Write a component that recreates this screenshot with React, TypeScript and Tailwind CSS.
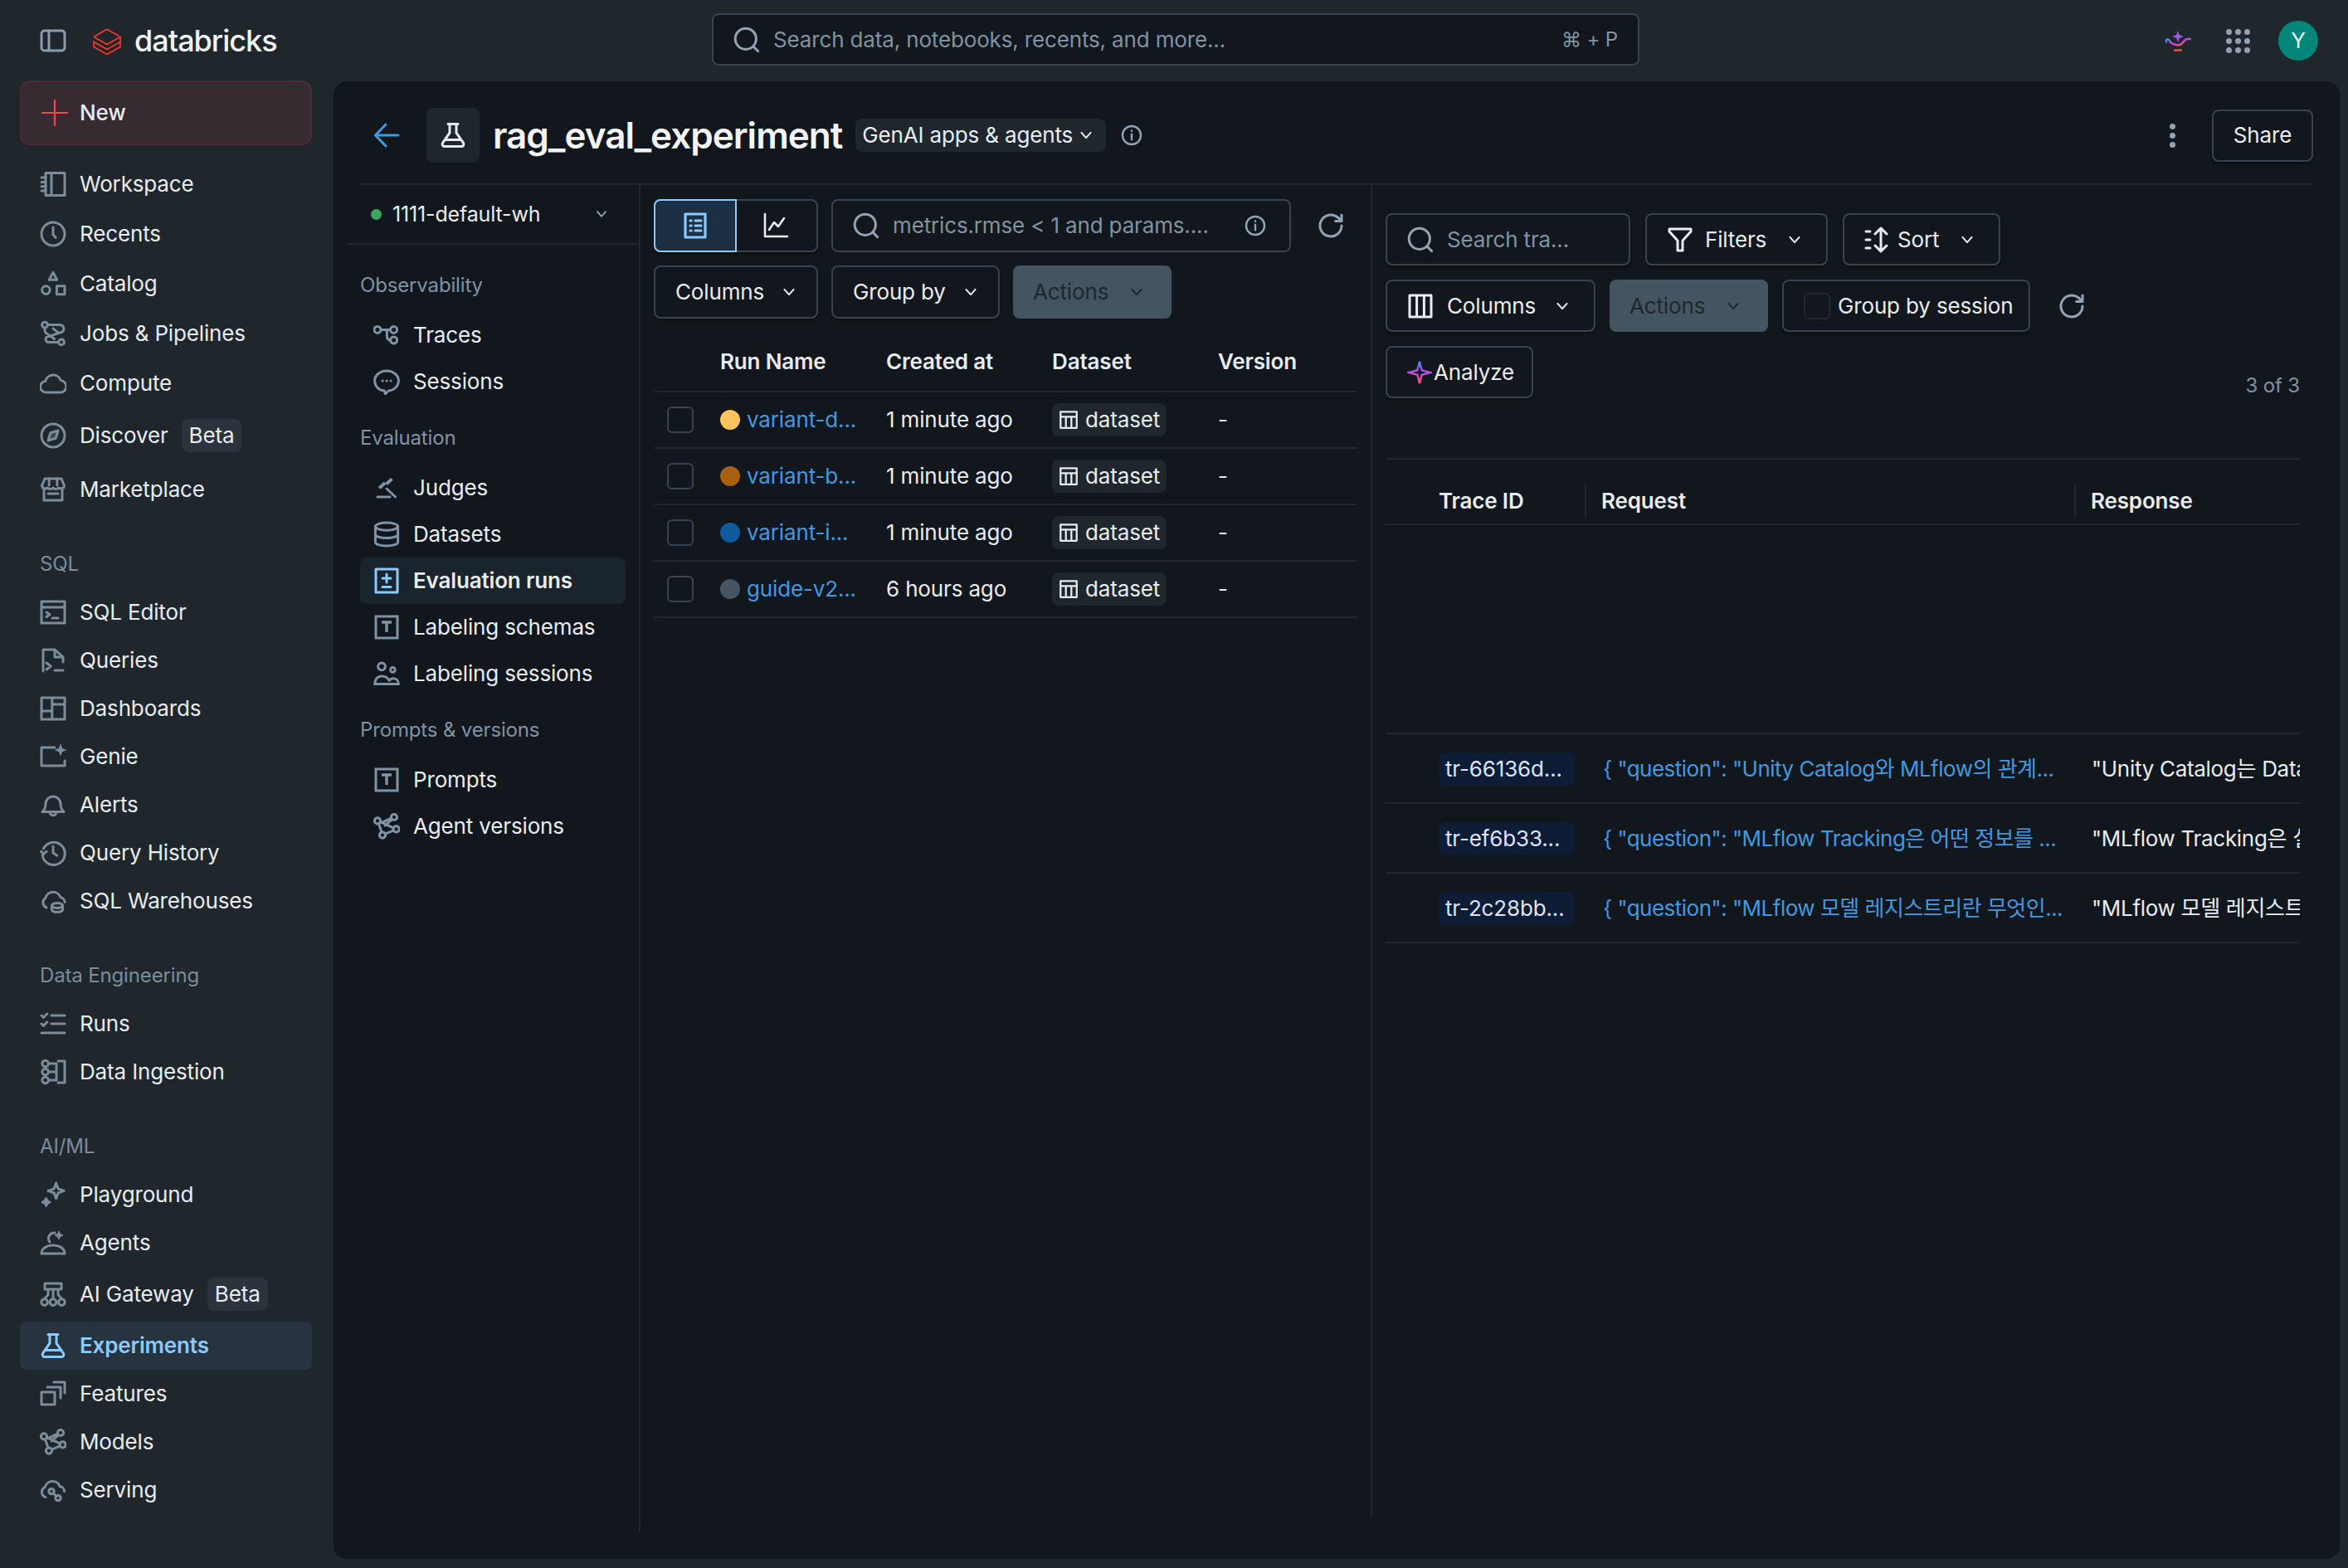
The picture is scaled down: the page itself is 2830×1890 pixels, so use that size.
import type { ReactNode } from 'react'

const stroke = { fill: 'none', stroke: 'currentColor', strokeLinecap: 'round', strokeLinejoin: 'round' } as const

const paths: Record<string, ReactNode> = {
  panel: <><rect x="1" y="2" width="14" height="12" rx="1.800" /><path d="M5.500 2v12" /></>,
  workspace: <><path d="M3.500 1.200H15v13.600H3.500z" /><path d="M7 1.200v13.600M1 4h2.500M1 6.700h2.500M1 9.400h2.500M1 12h2.500" /></>,
  recents: <><circle cx="8" cy="8" r="7" /><path d="M8 4v4.400l1.600 1.800" /></>,
  catalog: <><path d="M8 1.200l2.400 4.400H5.600z" /><circle cx="3.700" cy="11.800" r="2.400" /><path d="M10.200 9.400H15v5h-4.800z" /></>,
  jobs: <><circle cx="3" cy="2.800" r="1.700" /><circle cx="13" cy="13.200" r="1.700" /><path d="M5 2.800h7.200a2.400 2.400 0 0 1 1.400 4.200L4 10.200a2 2 0 0 0 .6 3h6.400M3 5v1.400a2 2 0 0 0 .8 1.400l5 3.400M8 5l3 2.400" /></>,
  compute: <path d="M4 13.500a3.400 3.400 0 0 1-.6-6.800 4.800 4.800 0 0 1 9.200-.4 3.600 3.600 0 0 1-.6 7.200z" />,
  discover: <><circle cx="8" cy="8" r="7" /><path d="M11 5L9.600 9.600 5 11l1.400-4.600z" fill="currentColor" fillOpacity=".3" /></>,
  market: <><path d="M2.500 8v6.500h11V8M1.200 5.800L3 1.500h10l1.800 4.300a2.100 2.100 0 0 1-3.400 1.200 2.400 2.400 0 0 1-3.400 0 2.400 2.400 0 0 1-3.400 0 2.100 2.100 0 0 1-3.400-1.200z" /><path d="M5.600 1.500v4M10.400 1.500v4M5 10.500h6" /></>,
  sqlEditor: <><path d="M1 1.500h14v13H1zM1 5h14" /><path d="M4 8l2 1.400L4 10.800M7.500 11.500H11" /></>,
  queries: <><path d="M2 14.500V1.500h7l5 4.500v3M9 1.500V6h5" /><path d="M4 9.500l2.600 2L4 13.500M9 14h5" /></>,
  dash: <path d="M1 1.500h14v13H1zM7.400 1.500v13M7.400 9.500H1M7.400 5.500H15" />,
  genie: <><path d="M9 2.500H1v11h14v-3" /><path d="M12.500 .8l.9 2.300 2.300.9-2.300.9-.9 2.300-.9-2.300-2.300-.9 2.300-.9z" fill="currentColor" strokeWidth=".5" /></>,
  bell: <><path d="M1.500 12.200c1.200-1 2-2 2-4.700a4.500 4.500 0 0 1 9 0c0 2.700.8 3.700 2 4.700z" /><path d="M6 12.400a2 2 0 0 0 4 0" /></>,
  history: <><path d="M2.200 5.500a6.800 6.800 0 1 1-.6 4" /><path d="M.8 7.200l1.500 1.600L4 7.200" /><path d="M8 4v4l2.400 1.600" /></>,
  warehouse: <><path d="M4 12a3.300 3.300 0 0 1-.6-5.800 4.700 4.700 0 0 1 9-.4 3 3 0 0 1 2.600 3" /><ellipse cx="10.500" cy="10.800" rx="3.300" ry="1.500" /><path d="M7.200 10.800v2.500c0 .8 1.500 1.500 3.300 1.500s3.300-.7 3.300-1.500v-2.500" /></>,
  runs: <path d="M1 3l1.200 1.200L4.400 2M1 8l1.200 1.200L4.400 7M7 3h8M7 8h8M1 13.500h14" />,
  ingest: <><circle cx="3.300" cy="3" r="1.900" /><circle cx="3.300" cy="8" r="1.900" /><circle cx="3.300" cy="13" r="1.900" /><path d="M5.500 3H10v10H5.500M10 8H5.500M11 1.500h4v13h-4" /></>,
  play: <><path d="M9.800 1l1.200 3.400 3.600 1.300-3.600 1.300-1.200 3.400L8.600 7 5 5.700l3.600-1.300z" /><path d="M3.800 10.300l.7 1.500 1.500.7-1.500.7-.7 1.500-.7-1.500-1.500-.7 1.500-.7z" fill="currentColor" /></>,
  agents: <><path d="M1 14.500c0-3 3-5 7-5s7 2 7 5z" /><path d="M9 2a3.400 3.400 0 0 0-3 5.500" /><path d="M11.500 1l.8 1.700 1.700.8-1.700.8-.8 1.700-.8-1.700-1.700-.8 1.700-.8z" fill="currentColor" strokeWidth=".5" /></>,
  gateway: <><path d="M3 1.500h10v3.500H3zM8 5v5.500M5 5v3.200L3 10.500M11 5v3.200l2 2.300" /><circle cx="2.800" cy="12.800" r="1.900" /><circle cx="8" cy="12.800" r="1.900" /><circle cx="13.200" cy="12.800" r="1.900" /></>,
  beaker: <><path d="M5 1.200h6M6 1.200v5.400L1.800 12.600a1.300 1.300 0 0 0 1.100 2.100h10.200a1.300 1.300 0 0 0 1.100-2.100L10 6.600V1.200" /><path d="M3.400 10.800h9.200" /></>,
  features: <path d="M1 7h8v7.500H1zM4.500 4h8v6.500M8.500 1H15v6.500" />,
  models: <><circle cx="2.500" cy="4.700" r="1.800" /><circle cx="12.500" cy="2.500" r="1.800" /><circle cx="13.800" cy="9.700" r="1.800" /><circle cx="5.500" cy="13.300" r="1.800" /><path d="M4.200 5.300l7.900 3.600M10.800 3.100L5 5.800M11.300 3.800L7 7.500M3.200 6.400l1.800 5.100M7.200 12.600l5-2.200" /></>,
  serving: <><path d="M3.500 12.300a3.200 3.200 0 0 1-.4-6 4.700 4.700 0 0 1 9-.4 3 3 0 0 1 2.700 3" /><circle cx="7" cy="8.800" r="1.600" /><circle cx="11" cy="12.800" r="1.600" /><path d="M8.200 10l1.600 1.600" /></>,
  traces: <><circle cx="2.500" cy="4.700" r="2" /><circle cx="12.300" cy="4.700" r="2" /><circle cx="12.300" cy="11" r="2" /><path d="M4.500 4.700h5.800M6.800 4.700c.9 0 1.400.5 1.400 1.500v2.600c0 1.500.7 2.200 2.100 2.200" /></>,
  sessions: <><path d="M8 1.500c-4 0-7.200 2.700-7.200 6s2.600 5.700 5.800 6l.6 1.800 2-1.800c3.200-.3 6-2.700 6-6 0-3.300-3.200-6-7.200-6z" /><path d="M5.500 7.500h.1M8 7.500h.1M10.500 7.500h.1" /></>,
  judges: <><path d="M7.800 5.800L11.200 2.600M3.600 8.200L7 5" strokeWidth="2" strokeLinecap="butt" /><path d="M8 8.500l5.300 5M2.500 13.500h7.500" /></>,
  datasets: <><ellipse cx="8" cy="3.300" rx="6.800" ry="2.300" /><path d="M1.200 3.300v9.400c0 1.300 3 2.300 6.800 2.300s6.800-1 6.800-2.300V3.300M1.200 8c0 1.300 3 2.300 6.800 2.300s6.800-1 6.800-2.300" /></>,
  evalRuns: <><path d="M1.500 1h13v14h-13z" /><path d="M8 4v5M5.500 6.500h5M5.500 11.800h5" /></>,
  schema: <><path d="M1.500 1.500h13v13h-13z" strokeLinejoin="miter" /><path d="M5 5h6M8 5v6" strokeLinecap="butt" strokeWidth="1.700" /></>,
  people: <><circle cx="5" cy="3.700" r="2.200" /><circle cx="11.700" cy="5.700" r="1.400" /><path d="M.8 14.200c0-2.800 1.900-4.700 4.200-4.700 2.100 0 3.700 1 4.500 2.600.7-.8 1.500-1.200 2.400-1.200 1.800 0 3.300 1.300 3.300 3.300z" /></>,
  back: <path d="M15 8H1.500M7.500 1.500L1.200 8l6.300 6.500" />,
  info: <><circle cx="8" cy="8" r="6.800" /><path d="M8 7.200v4M8 4.600v.2" /></>,
  search: <><circle cx="7.400" cy="7.400" r="6.300" /><path d="M12 12l2.800 2.800" /></>,
  refresh: <path d="M14.500 8A6.500 6.500 0 1 1 12.300 3.100L14.500 5.200M14.500 1.500v3.700h-3.700" />,
  list: <><path d="M2 1h12v14H2z" /><path d="M5 5h.6M5 8h.6M5 11h.6M8 5h3.500M8 8h3.500M8 11h3.500" /></>,
  chart: <path d="M1.500 1v13.500H15M4 10.500l3-4.500 2.500 2.500L13 3.500" />,
  filter: <path d="M1.500 1.500h13v1.500L9.500 8.500v6h-3v-6L1.500 3z" />,
  sort: <path d="M1 3h2.500M1 8h2.500M1 13h2.500M10 15V1M6.500 4.500L10 1l3.500 3.500M6.500 11.500L10 15l3.500-3.500" />,
  columns: <path d="M1.500 1.500h13v13h-13zM5.800 1.500v13M10.200 1.500v13" />,
  table: <path d="M1.500 1.500h13v13h-13zM1.500 5.500h13M5.800 5.500v9M10.200 5.500v9" />,
  chevron: <path d="M3.500 5.500L8 10.500l4.500-5" />,
  plus: <path d="M8 .5v15M.5 8h15" />,
}

function Icon({ name, size = 32, className = '', width = 1.5 }: { name: string; size?: number; className?: string; width?: number }) {
  return (
    <svg viewBox="0 0 16 16" width={size} height={size} className={`shrink-0 ${className}`} {...stroke} strokeWidth={width}>
      {paths[name]}
    </svg>
  )
}

function Beta() {
  return <span className="ml-4 h-[40px] px-[9px] flex items-center rounded-[8px] bg-[#2b343c]">Beta</span>
}

function SideItem({ icon, label, beta, active, h = 'h-[58px]' }: { icon: string; label: string; beta?: boolean; active?: boolean; h?: string }) {
  return (
    <div className={`${h} flex items-center px-6 rounded-[8px] ${active ? 'bg-[#27343f] text-[#8acaff] font-semibold' : 'text-[#e8ecf0]'}`}>
      <Icon name={icon} className={`mr-4 ${active ? 'text-[#8acaff]' : 'text-[#7b8c9a]'}`} />
      <span>{label}</span>
      {beta && <Beta />}
    </div>
  )
}

function SideLabel({ children, className = '' }: { children: ReactNode; className?: string }) {
  return <div className={`h-[30px] pl-[24px] flex items-center text-[24px] text-[#7b8c9a] ${className}`}>{children}</div>
}

function Sidebar() {
  return (
    <aside className="w-[402px] shrink-0 pl-6 pr-[26px] -mt-px">
      <div className="h-[78px] flex items-center px-6 rounded-[12px] bg-[#352b30] border-2 border-[#4a2c31] font-medium text-[#e8ecf0]">
        <Icon name="plus" className="mr-[14px] text-[#f0484f]" width={1.1} />
        New
      </div>
      <div className="mt-[17px]">
        <SideItem h="h-[60px]" icon="workspace" label="Workspace" />
        <SideItem h="h-[60px]" icon="recents" label="Recents" />
        <SideItem h="h-[60px]" icon="catalog" label="Catalog" />
        <SideItem h="h-[60px]" icon="jobs" label="Jobs & Pipelines" />
        <SideItem h="h-[60px]" icon="compute" label="Compute" />
        <SideItem h="h-[66px]" icon="discover" label="Discover" beta />
        <SideItem h="h-[64px]" icon="market" label="Marketplace" />
      </div>
      <SideLabel className="mt-[43px] mb-[14px]">SQL</SideLabel>
      <SideItem icon="sqlEditor" label="SQL Editor" />
      <SideItem icon="queries" label="Queries" />
      <SideItem icon="dash" label="Dashboards" />
      <SideItem icon="genie" label="Genie" />
      <SideItem icon="bell" label="Alerts" />
      <SideItem icon="history" label="Query History" />
      <SideItem icon="warehouse" label="SQL Warehouses" />
      <SideLabel className="mt-[46px] mb-[14px]">Data Engineering</SideLabel>
      <SideItem icon="runs" label="Runs" />
      <SideItem icon="ingest" label="Data Ingestion" />
      <SideLabel className="mt-[46px] mb-[14px]">AI/ML</SideLabel>
      <SideItem icon="play" label="Playground" />
      <SideItem icon="agents" label="Agents" />
      <SideItem h="h-[66px]" icon="gateway" label="AI Gateway" beta />
      <SideItem icon="beaker" label="Experiments" active />
      <SideItem icon="features" label="Features" />
      <SideItem icon="models" label="Models" />
      <SideItem icon="serving" label="Serving" />
    </aside>
  )
}

function Topbar() {
  return (
    <header className="h-[98px] shrink-0 flex items-center">
      <div className="w-[858px] shrink-0 flex items-center pl-12">
        <Icon name="panel" className="text-[#8b9dad]" />
        <svg viewBox="0 0 34 35" width="34" height="35" className="ml-8" fill="none" stroke="#ff3621" strokeWidth="1.700">
          <path d="M1 12.500L17 3.300 31.500 11.500M1 12.500L17 21.500 33 12.500V18.500L17 27.500 1 18.500V24.500L17 33.500 33 24.500V19" />
        </svg>
        <span className="ml-4 text-[36px] font-medium tracking-[-1px] text-[#f2f4f6]">databricks</span>
      </div>
      <div className="w-[1118px] h-[63px] mb-[3px] flex items-center pl-6 pr-6 rounded-[8px] bg-[#11171c] border-2 border-[#37444f] text-[#8193a2]">
        <Icon name="search" className="mr-4 text-[#92a4b3]" />
        <span className="flex-1">Search data, notebooks, recents, and more...</span>
        <span className="text-[24px]">⌘ + P</span>
      </div>
      <div className="flex-1 flex items-center justify-end pr-[36px]">
        <svg viewBox="0 0 32 26" width="32" height="26">
          <defs>
            <linearGradient id="lamp" x1="0" y1="0" x2="1" y2="1">
              <stop offset="0" stopColor="#4299e0" />
              <stop offset=".5" stopColor="#ca42e0" />
              <stop offset="1" stopColor="#ff5f46" />
            </linearGradient>
          </defs>
          <path d="M16 1l1.800 5.200L23 8l-5.200 1.800L16 15l-1.800-5.200L9 8l5.200-1.800z" fill="#a35cf0" />
          <path d="M3 15c-3-2 0-5 2-3 2 4 7 7 13 6 5-1 5-7 9-7h5" fill="none" stroke="url(#lamp)" strokeWidth="2.400" />
          <path d="M11 24.500h10" stroke="#ff4d4d" strokeWidth="2.400" />
        </svg>
        <div className="ml-[42px] grid grid-cols-3 gap-[4px]">
          {Array.from({ length: 9 }).map((_, i) => (
            <span key={i} className="w-[7px] h-[7px] rounded-full bg-[#92a4b3]" />
          ))}
        </div>
        <div className="ml-[34px] w-[48px] h-[48px] rounded-full bg-[#00877a] flex items-center justify-center text-[#f2f4f6]">Y</div>
      </div>
    </header>
  )
}

function NavItem({ icon, label, active }: { icon: string; label: string; active?: boolean }) {
  return (
    <div className={`h-[56px] flex items-center pl-4 rounded-[8px] ${active ? 'bg-[#1a242c] font-semibold text-[#e8ecf0]' : 'text-[#e8ecf0]'}`}>
      <Icon name={icon} className={`mr-4 ${active ? 'text-[#8acaff]' : 'text-[#7f93a5]'}`} />
      {label}
    </div>
  )
}

function NavLabel({ children, className = '' }: { children: ReactNode; className?: string }) {
  return <div className={`h-[32px] mb-4 flex items-center text-[24px] text-[#7f93a5] ${className}`}>{children}</div>
}

function LeftPane() {
  return (
    <div className="w-[370px] shrink-0 pl-4 border-r-2 border-[#1f272d]">
      <div className="h-[72px] flex items-center pl-[29px] pr-[36px] border-b-2 border-[#1f272d] text-[25px]">
        <span className="w-[13px] h-[13px] rounded-full bg-[#3ba65e] mr-[13px]" />
        <span className="flex-1">1111-default-wh</span>
        <Icon name="chevron" size={18} className="text-[#92a4b3]" width={1.6} />
      </div>
      <div className="pt-[33px] pl-4 pr-[16px]">
        <NavLabel>Observability</NavLabel>
        <NavItem icon="traces" label="Traces" />
        <NavItem icon="sessions" label="Sessions" />
        <NavLabel className="mt-6">Evaluation</NavLabel>
        <NavItem icon="judges" label="Judges" />
        <NavItem icon="datasets" label="Datasets" />
        <NavItem icon="evalRuns" label="Evaluation runs" active />
        <NavItem icon="schema" label="Labeling schemas" />
        <NavItem icon="people" label="Labeling sessions" />
        <NavLabel className="mt-6">Prompts & versions</NavLabel>
        <NavItem icon="schema" label="Prompts" />
        <NavItem icon="models" label="Agent versions" />
      </div>
    </div>
  )
}

function Btn({ label, w, disabled }: { label: string; w: string; disabled?: boolean }) {
  return (
    <div className={`${w} h-[64px] flex items-center justify-between pl-6 rounded-[8px] ${disabled ? 'pr-[32px] bg-[#445461] text-[#1f272d]' : 'pr-[23px] border-2 border-[#37444f] shadow-[0_2px_3px_rgba(0,0,0,0.4)]'}`}>
      {label}
      <Icon name="chevron" size={20} width={1.6} />
    </div>
  )
}

const runs = [
  { name: 'variant-d...', color: 'bg-[#ffc55c]', at: '1 minute ago' },
  { name: 'variant-b...', color: 'bg-[#a85f0e]', at: '1 minute ago' },
  { name: 'variant-i...', color: 'bg-[#0e5a9c]', at: '1 minute ago' },
  { name: 'guide-v2...', color: 'bg-[#475563]', at: '6 hours ago' },
]

function RunsPane() {
  return (
    <div className="w-[882px] shrink-0 mb-[18px] pl-4 pr-[16px] pt-[17px] border-r-2 border-[#1f272d]">
      <div className="flex items-center">
        <div className="w-[198px] h-[64px] flex rounded-[8px] border-2 border-[#37444f] shadow-[0_2px_3px_rgba(0,0,0,0.4)]">
          <div className="w-[100px] -m-[2px] flex items-center justify-center rounded-l-[8px] bg-[#1d3043] border-2 border-[#8acaff] text-[#8acaff]">
            <Icon name="list" width={1.6} />
          </div>
          <div className="flex-1 flex items-center justify-center text-[#e8ecf0]">
            <Icon name="chart" width={1.3} />
          </div>
        </div>
        <div className="ml-4 w-[554px] h-[64px] flex items-center pl-6 pr-[28px] rounded-[8px] border-2 border-[#37444f] text-[#8193a2]">
          <Icon name="search" className="mr-4 text-[#92a4b3]" />
          <span className="flex-1">metrics.rmse &lt; 1 and params....</span>
          <Icon name="info" size={26} className="text-[#92a4b3]" />
        </div>
        <Icon name="refresh" size={32} className="ml-8 text-[#92a4b3]" />
      </div>
      <div className="mt-4 flex gap-4">
        <Btn label="Columns" w="w-[198px]" />
        <Btn label="Group by" w="w-[203px]" />
        <Btn label="Actions" w="w-[191px]" disabled />
      </div>
      <div className="mt-4 h-[73px] flex items-center border-b-2 border-[#1f272d] font-semibold text-[#e8ecf0]">
        <span className="w-[80px]" />
        <span className="w-[200px]">Run Name</span>
        <span className="w-[200px]">Created at</span>
        <span className="w-[200px]">Dataset</span>
        <span>Version</span>
      </div>
      {runs.map(r => (
        <div key={r.name} className="h-[68px] flex items-center border-b-2 border-[#1f272d]">
          <span className="w-[80px] pl-4">
            <span className="block w-[32px] h-[32px] rounded-[6px] border-2 border-[#37444f]" />
          </span>
          <span className="w-[200px] flex items-center">
            <span className={`w-[24px] h-[24px] rounded-full mr-[8px] ${r.color}`} />
            <span className="text-[#4299e0]">{r.name}</span>
          </span>
          <span className="w-[200px]">{r.at}</span>
          <span className="w-[200px]">
            <span className="inline-flex items-center w-[138px] h-[40px] px-2 rounded-[8px] bg-[#1f272d]">
              <Icon name="table" size={24} className="mr-[8px]" />
              dataset
            </span>
          </span>
          <span>-</span>
        </div>
      ))}
    </div>
  )
}

function OutlineBox({ w, children }: { w: string; children: ReactNode }) {
  return (
    <div className={`${w} h-[63px] flex items-center rounded-[8px] border-2 border-[#37444f] shadow-[0_2px_3px_rgba(0,0,0,0.4)] whitespace-nowrap`}>
      {children}
    </div>
  )
}

const traces = [
  { id: 'tr-66136d...', req: '{ "question": "Unity Catalog와 MLflow의 관계...', res: '"Unity Catalog는 Data Intelligence' },
  { id: 'tr-ef6b33...', req: '{ "question": "MLflow Tracking은 어떤 정보를 ...', res: '"MLflow Tracking은 실험 중에 생성되는' },
  { id: 'tr-2c28bb...', req: '{ "question": "MLflow 모델 레지스트리란 무엇인...', res: '"MLflow 모델 레지스트리는 모델의 전체' },
]

function TracesPane() {
  return (
    <div className="flex-1 min-w-0 pl-4 pr-[48px] pt-[34px]">
      <div className="flex gap-[18px]">
        <OutlineBox w="w-[295px] px-6 text-[#8193a2]">
          <Icon name="search" className="mr-4 text-[#92a4b3]" />
          Search tra...
        </OutlineBox>
        <OutlineBox w="w-[220px] pl-6 pr-[28px] justify-between">
          <span className="flex items-center"><Icon name="filter" className="mr-[14px]" />Filters</span>
          <Icon name="chevron" size={20} width={1.6} />
        </OutlineBox>
        <OutlineBox w="w-[190px] pl-6 pr-[28px] justify-between">
          <span className="flex items-center"><Icon name="sort" className="mr-[8px]" />Sort</span>
          <Icon name="chevron" size={20} width={1.6} />
        </OutlineBox>
      </div>
      <div className="mt-[17px] flex items-center gap-[17px]">
        <OutlineBox w="w-[253px] pl-6 pr-[28px] justify-between">
          <span className="flex items-center"><Icon name="columns" className="mr-4" />Columns</span>
          <Icon name="chevron" size={20} width={1.6} />
        </OutlineBox>
        <div className="w-[191px] h-[63px] flex items-center justify-between pl-6 pr-[32px] rounded-[8px] bg-[#445461] text-[#1f272d]">
          Actions
          <Icon name="chevron" size={20} width={1.6} />
        </div>
        <OutlineBox w="w-[299px] pl-6">
          <span className="w-[32px] h-[32px] mr-[9px] rounded-[6px] border-2 border-[#1f272d]" />
          Group by session
        </OutlineBox>
        <Icon name="refresh" size={32} className="ml-[17px] text-[#92a4b3]" />
      </div>
      <div className="mt-[17px] flex items-end justify-between">
        <OutlineBox w="w-[178px] px-6">
          <svg viewBox="0 0 16 16" width="30" height="32" className="shrink-0 mr-[2px]" fill="none" strokeWidth="1.300">
            <defs>
              <linearGradient id="spark" x1="0" y1="0" x2="0" y2="1">
                <stop offset="0" stopColor="#4a7ff0" />
                <stop offset=".5" stopColor="#c04ae0" />
                <stop offset="1" stopColor="#ff4d6a" />
              </linearGradient>
            </defs>
            <path d="M8 1l1.400 5.500L15 8l-5.600 1.500L8 15l-1.400-5.500L1 8l5.600-1.500z" stroke="url(#spark)" />
          </svg>
          Analyze
        </OutlineBox>
        <span className="text-[24px] text-[#8193a2] pb-[3px]">3 of 3</span>
      </div>
      <div className="mt-[72px] h-[81px] flex items-center pt-[22px] border-y-2 border-[#1f272d] font-semibold text-[#e8ecf0]">
        <span className="w-[242px] pl-[64px] h-[40px] flex items-center border-r-2 border-[#1f272d]">Trace ID</span>
        <span className="w-[590px] pl-[18px] h-[40px] flex items-center border-r-2 border-[#1f272d]">Request</span>
        <span className="pl-[18px]">Response</span>
      </div>
      <div className="h-[252px] border-b-2 border-[#1f272d]" />
      {traces.map(t => (
        <div key={t.id} className="h-[84px] pt-[2px] flex items-center border-b-2 border-[#1f272d] whitespace-nowrap overflow-hidden">
          <span className="w-[262px] shrink-0 pl-[64px]">
            <span className="inline-flex items-center w-[164px] h-[40px] pl-2 rounded-[8px] bg-[#0e1c36] text-[#dfe3fb]">{t.id}</span>
          </span>
          <span className="w-[589px] shrink-0 text-[#4299e0] tracking-[-0.5px]">{t.req}</span>
          <span className="tracking-[-0.3px]">{t.res}</span>
        </div>
      ))}
    </div>
  )
}

export default function App() {
  return (
    <div className="w-[2830px] h-[1890px] flex flex-col overflow-hidden bg-[#1f272d] text-[26px] leading-none tracking-[-0.15px] text-[#e8ecf0] font-['Inter','Noto_Sans_CJK_KR',sans-serif]">
      <Topbar />
      <div className="flex-1 min-h-0 flex">
        <Sidebar />
        <main className="flex-1 min-w-0 mr-[10px] mb-[11px] rounded-[16px] bg-[#11171c] flex flex-col pb-[32px]">
          <div className="mx-[32px] h-[125px] shrink-0 flex items-center border-b-2 border-[#1f272d] pt-[7px]">
            <Icon name="back" className="ml-4 text-[#4299e0]" />
            <span className="ml-8 w-[64px] h-[66px] flex items-center justify-center rounded-[8px] bg-[#1f272d]">
              <Icon name="beaker" />
            </span>
            <h1 className="ml-4 text-[44px] font-semibold tracking-[-1px] text-[#f2f4f6]">rag_eval_experiment</h1>
            <span className="ml-4 h-[40px] pl-2 pr-[14px] flex items-center rounded-[8px] bg-[#1f272d]">
              GenAI apps & agents
              <Icon name="chevron" size={20} className="ml-[6px]" width={1.6} />
            </span>
            <Icon name="info" size={26} className="ml-[18px] text-[#92a4b3]" />
            <div className="ml-auto flex flex-col gap-[4px]">
              <span className="w-[7px] h-[7px] rounded-full bg-[#92a4b3]" />
              <span className="w-[7px] h-[7px] rounded-full bg-[#92a4b3]" />
              <span className="w-[7px] h-[7px] rounded-full bg-[#92a4b3]" />
            </div>
            <span className="ml-[44px] w-[122px] h-[63px] flex items-center justify-center rounded-[8px] border-2 border-[#37444f] shadow-[0_2px_3px_rgba(0,0,0,0.4)]">Share</span>
          </div>
          <div className="flex-1 min-h-0 flex">
            <LeftPane />
            <RunsPane />
            <TracesPane />
          </div>
        </main>
      </div>
    </div>
  )
}
